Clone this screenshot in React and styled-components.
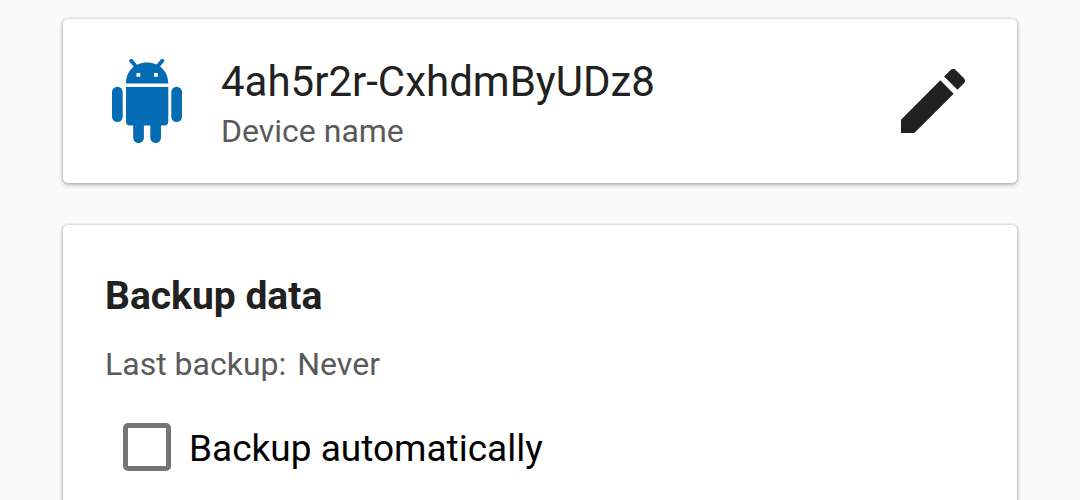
import React from "react";
import styled, { createGlobalStyle } from "styled-components";

const GlobalStyle = createGlobalStyle`
  *, *::before, *::after { box-sizing: border-box; }
  body {
    margin: 0;
    background: #fafafa;
    color: #212121;
    font-family: Roboto, "Liberation Sans", sans-serif;
  }
`;

const Page = styled.main`
  display: flex;
  flex-direction: column;
  gap: 42px;
  padding: 19px 63px 0;
  height: 100vh;
  overflow: hidden;
`;

const Card = styled.section`
  flex-shrink: 0;
  background: #fff;
  border-radius: 5px;
  box-shadow: 0 2px 5px rgba(0, 0, 0, 0.28), 0 0 3px rgba(0, 0, 0, 0.2);
`;

const DeviceCard = styled(Card)`
  display: flex;
  align-items: center;
  gap: 38px;
  padding: 33px 52px 33px 48px;
`;

const BackupCard = styled(Card)`
  padding: 48px 42px;
`;

const DeviceText = styled.div`
  flex: 1;
  min-width: 0;
`;

const DeviceName = styled.h1`
  margin: 0;
  font-size: 42px;
  line-height: 60px;
  font-weight: 400;
`;

const Caption = styled.p`
  display: flex;
  gap: 11px;
  margin: 0;
  color: #5a5a5a;
  font-size: 32px;
  line-height: 38px;
`;

const EditButton = styled.button`
  display: flex;
  padding: 0;
  border: 0;
  background: none;
  color: #212121;
  cursor: pointer;
`;

const Heading = styled.h2`
  margin: 0 0 26px;
  font-size: 39px;
  line-height: 46px;
  font-weight: 700;
`;

const CheckRow = styled.label`
  display: flex;
  align-items: flex-start;
  gap: 18px;
  margin-top: 40px;
  padding-left: 18px;
  color: #000;
  font-size: 37px;
  line-height: 52px;
`;

const CheckBox = styled.input`
  appearance: none;
  flex: none;
  width: 48px;
  height: 48px;
  margin: 0;
  border: 5px solid #757575;
  border-radius: 5px;
  background: #fff;
  &:checked { background: #757575; }
`;

const AndroidIcon = () => (
  <svg width="72" height="84" viewBox="0 0 72 84" fill="#046cb5" aria-hidden="true">
    <path d="M20.2 1.8L25 7.5M51.3 1.8L46.5 7.5" stroke="#046cb5" strokeWidth="3.8" strokeLinecap="round" />
    <path d="M15 24.5C15 13 23 3.5 36 3.5S57.3 13 57.3 24.5ZM25.5 14v3.8h3.8V14ZM43 14v3.8h3.8V14Z" fillRule="evenodd" />
    <path d="M15 28H57.3V62.5Q57.3 66.5 53.3 66.5H50V78.7A5.35 5.35 0 0 1 39.3 78.7V66.5H32.9V78.7A5.35 5.35 0 0 1 22.2 78.7V66.5H19Q15 66.5 15 62.5Z" />
    <rect x="1" y="27.7" width="10.7" height="35.3" rx="5.35" />
    <rect x="60.3" y="27.7" width="10.7" height="35.3" rx="5.35" />
  </svg>
);

const PencilIcon = () => (
  <svg width="64" height="64" viewBox="3 3 18 18" fill="currentColor" aria-hidden="true">
    <path d="M3 17.25V21h3.75L17.81 9.94l-3.75-3.75L3 17.25zM20.71 7.04c.39-.39.39-1.02 0-1.41l-2.34-2.34c-.39-.39-1.02-.39-1.41 0l-1.83 1.83 3.75 3.75 1.83-1.83z" />
  </svg>
);

export default function App() {
  return (
    <>
      <GlobalStyle />
      <Page>
        <DeviceCard>
          <AndroidIcon />
          <DeviceText>
            <DeviceName>4ah5r2r-CxhdmByUDz8</DeviceName>
            <Caption>Device name</Caption>
          </DeviceText>
          <EditButton type="button" aria-label="Edit device name">
            <PencilIcon />
          </EditButton>
        </DeviceCard>
        <BackupCard>
          <Heading>Backup data</Heading>
          <Caption>
            <span>Last backup:</span>
            <span>Never</span>
          </Caption>
          <CheckRow>
            <CheckBox type="checkbox" />
            Backup automatically
          </CheckRow>
        </BackupCard>
      </Page>
    </>
  );
}
